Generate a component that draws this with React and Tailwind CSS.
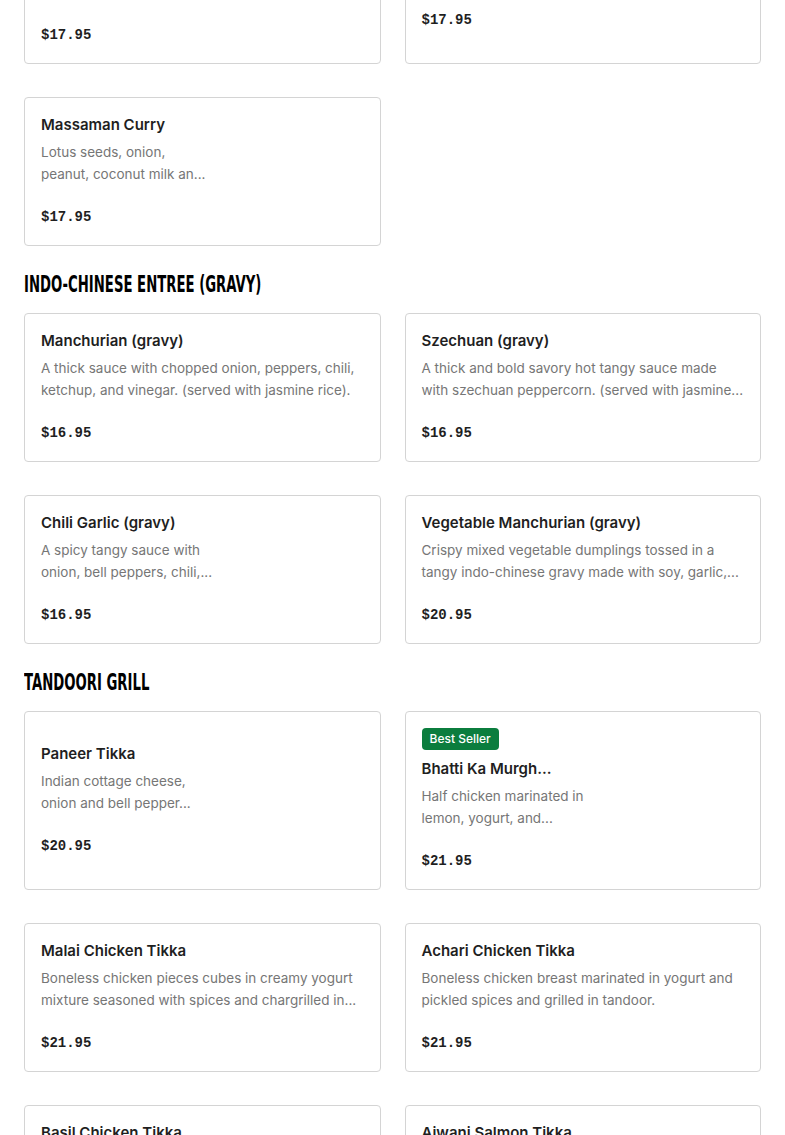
const sections = [
  {
    title: null,
    items: [
      {
        name: 'Panang Curry',
        badge: 'Best Seller',
        lines: ['Red curry paste, bell', 'pepper, basil leaves an...'],
        price: '$17.95',
      },
      {
        name: 'Pineapple Curry',
        lines: ['Pineapple, bell pepper, tomato and basil in red curry', 'sauce with coconut milk. (served with jasmine rice).'],
        price: '$17.95',
      },
      {
        name: 'Massaman Curry',
        lines: ['Lotus seeds, onion,', 'peanut, coconut milk an...'],
        price: '$17.95',
      },
    ],
  },
  {
    title: 'Indo-Chinese Entree (Gravy)',
    items: [
      {
        name: 'Manchurian (gravy)',
        lines: ['A thick sauce with chopped onion, peppers, chili,', 'ketchup, and vinegar. (served with jasmine rice).'],
        price: '$16.95',
      },
      {
        name: 'Szechuan (gravy)',
        lines: ['A thick and bold savory hot tangy sauce made', 'with szechuan peppercorn. (served with jasmine...'],
        price: '$16.95',
      },
      {
        name: 'Chili Garlic (gravy)',
        lines: ['A spicy tangy sauce with', 'onion, bell peppers, chili,...'],
        price: '$16.95',
      },
      {
        name: 'Vegetable Manchurian (gravy)',
        lines: ['Crispy mixed vegetable dumplings tossed in a', 'tangy indo-chinese gravy made with soy, garlic,...'],
        price: '$20.95',
      },
    ],
  },
  {
    title: 'Tandoori Grill',
    items: [
      {
        name: 'Paneer Tikka',
        lines: ['Indian cottage cheese,', 'onion and bell pepper...'],
        price: '$20.95',
      },
      {
        name: 'Bhatti Ka Murgh...',
        badge: 'Best Seller',
        lines: ['Half chicken marinated in', 'lemon, yogurt, and...'],
        price: '$21.95',
      },
      {
        name: 'Malai Chicken Tikka',
        lines: ['Boneless chicken pieces cubes in creamy yogurt', 'mixture seasoned with spices and chargrilled in...'],
        price: '$21.95',
      },
      {
        name: 'Achari Chicken Tikka',
        lines: ['Boneless chicken breast marinated in yogurt and', 'pickled spices and grilled in tandoor.'],
        price: '$21.95',
      },
      {
        name: 'Basil Chicken Tikka',
        lines: ['Boneless chicken marinated in basil pesto,', 'yogurt and spices, grilled in tandoor.'],
        price: '$21.95',
      },
      {
        name: 'Ajwani Salmon Tikka',
        lines: ['Salmon fillet marinated with carom seeds,', 'yogurt and spices, grilled in tandoor.'],
        price: '$24.95',
      },
    ],
  },
];

function MenuCard({ item }) {
  return (
    <div className="flex flex-col justify-center rounded border border-[#d4d4d4] bg-white p-4">
      {item.badge && (
        <span className="mb-2 self-start rounded bg-[#0b7d3e] px-2 py-[3px] text-[12px] font-medium leading-4 text-white">
          {item.badge}
        </span>
      )}
      <h3 className="text-[15px] font-semibold leading-[22px] text-[#1f1f1f]">{item.name}</h3>
      <div className="mt-[5px] text-[13.5px] leading-[22px] text-[#767676]">
        {item.lines.map((line, i) => (
          <p key={i} className="whitespace-nowrap">{line}</p>
        ))}
      </div>
      <p
        className="mt-5 text-[14px] font-bold leading-6 text-[#1f1f1f]"
        style={{ fontFamily: '"Liberation Mono", monospace' }}
      >
        {item.price}
      </p>
    </div>
  );
}

export default function App() {
  return (
    <div className="-mt-[115px] bg-white px-6 pb-10" style={{ fontFamily: 'Inter, "Noto Sans", sans-serif' }}>
      {sections.map((section, si) => (
        <section key={si} className={section.title ? 'pt-[22px]' : ''}>
          {section.title && (
            <h2
              className="mb-[13px] h-8 whitespace-nowrap text-[23px] font-bold uppercase leading-8 text-black"
              style={{ fontFamily: '"DejaVu Sans Condensed", sans-serif' }}
            >
              <span className="inline-block origin-left scale-x-[0.64]">{section.title}</span>
            </h2>
          )}
          <div className="grid grid-cols-2 gap-x-6 gap-y-[33px]">
            {section.items.map((item, i) => (
              <MenuCard key={i} item={item} />
            ))}
          </div>
        </section>
      ))}
    </div>
  );
}
